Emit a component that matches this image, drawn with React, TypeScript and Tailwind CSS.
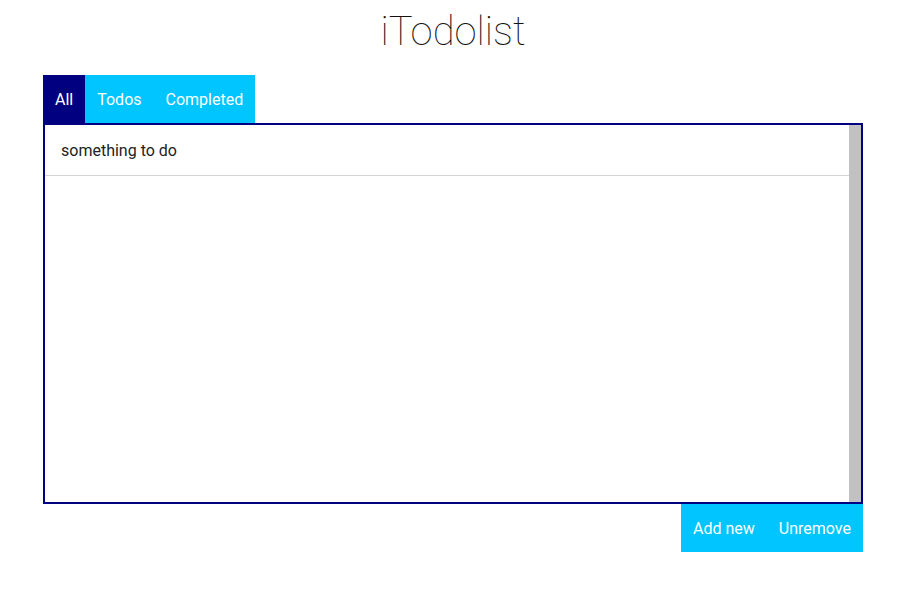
import React from "react";

export default function App() {
  const font = { fontFamily: "Roboto, 'Liberation Sans', sans-serif" };
  return (
    <div className="w-[909px] h-[592px] bg-white" style={font}>
      <h1 className="text-center text-[40px] leading-[48px] font-thin text-[#111] pt-[8px] pr-[3px] h-[75px]">
        iTodolist
      </h1>
      <div className="ml-[43px] w-[820px]">
        <div className="flex h-[48px] text-white text-[16px]">
          <div className="bg-[#000080] px-[12px] pt-[2px] flex items-center">All</div>
          <div className="bg-[#00c5ff] flex">
            <div className="px-[12px] pt-[2px] flex items-center">Todos</div>
            <div className="px-[12px] pt-[2px] flex items-center">Completed</div>
          </div>
        </div>
        <div className="border-2 border-[#000080] h-[381px] flex">
          <div className="flex-1">
            <div className="h-[51px] border-b border-[#d3d3d3] pl-[16px] pt-[2px] flex items-center text-[16px] text-[#222]">
              something to do
            </div>
          </div>
          <div className="w-[12px] bg-[#c1c1c1]"></div>
        </div>
        <div className="flex justify-end">
          <div className="bg-[#00c5ff] h-[48px] flex text-white text-[16px]">
            <div className="px-[12px] pt-[2px] flex items-center">Add new</div>
            <div className="px-[12px] pt-[2px] flex items-center">Unremove</div>
          </div>
        </div>
      </div>
    </div>
  );
}
